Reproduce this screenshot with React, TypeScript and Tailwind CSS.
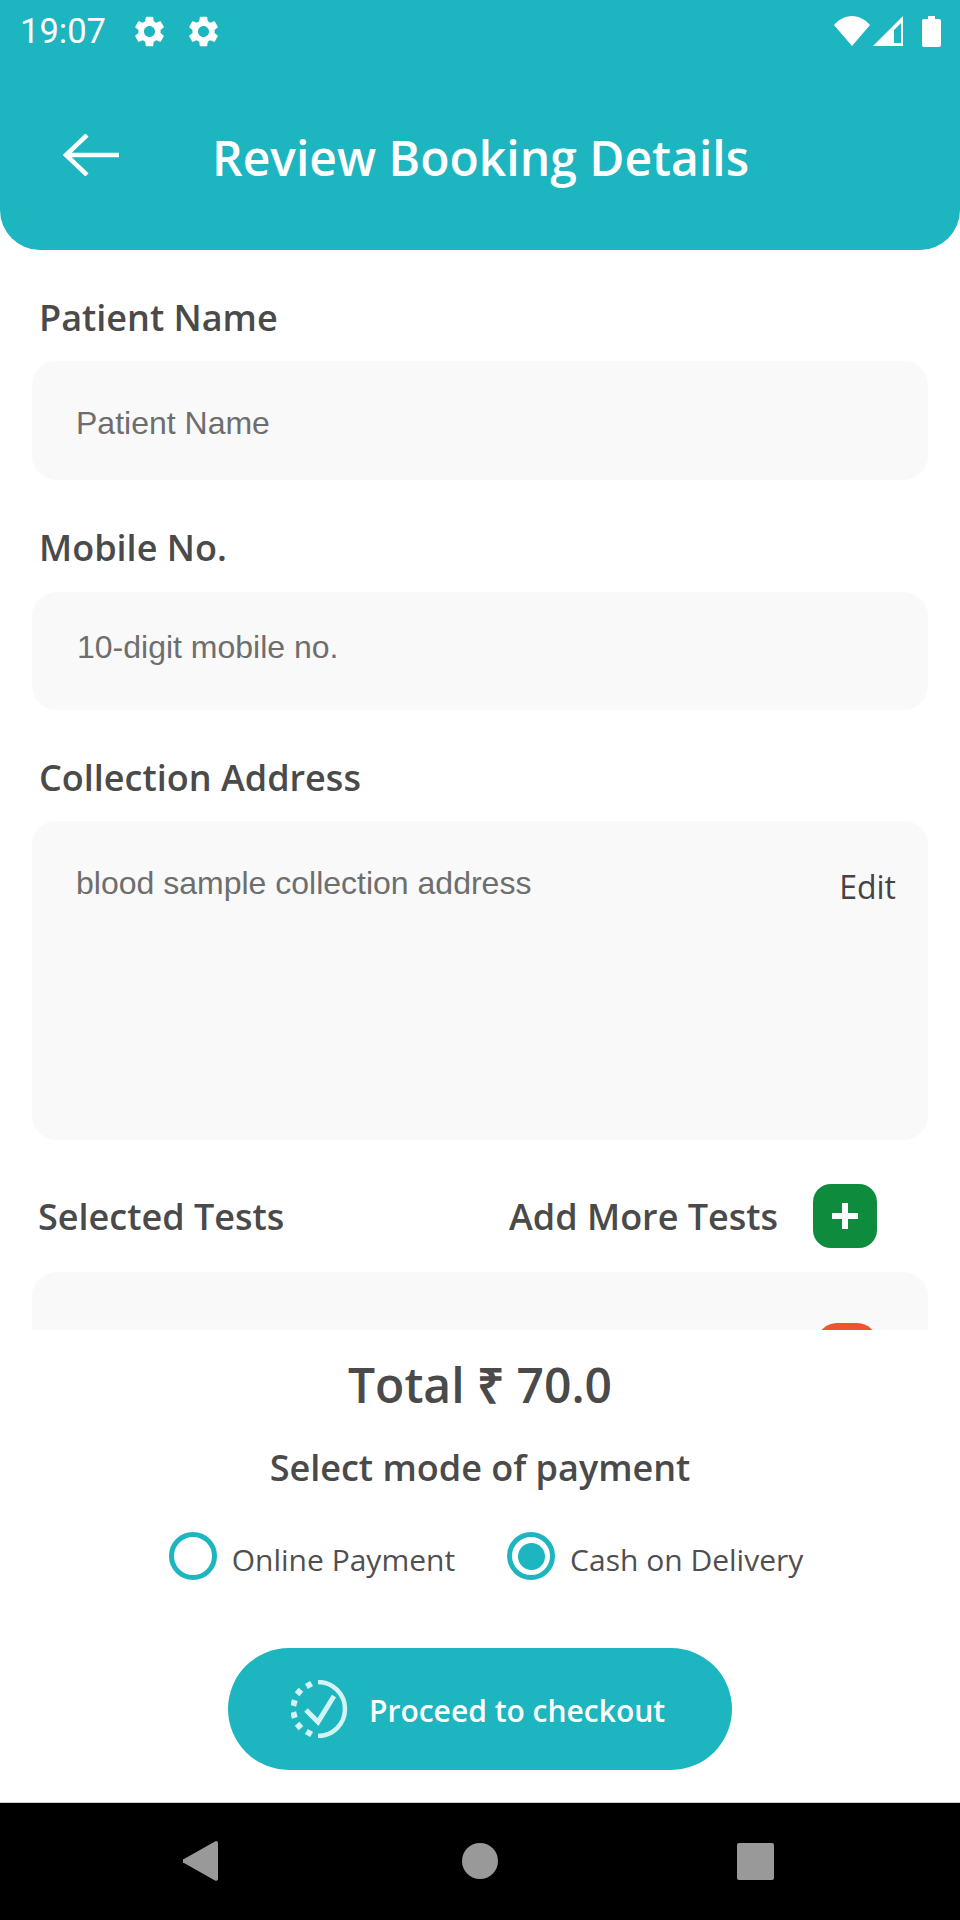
import React from 'react';

const GEAR =
  'M19.14 12.94c.04-.3.06-.61.06-.94 0-.32-.02-.64-.07-.94l2.03-1.58c.18-.14.23-.41.12-.61l-1.92-3.32c-.12-.22-.37-.29-.59-.22l-2.39.96c-.5-.38-1.03-.7-1.62-.94l-.36-2.54c-.04-.24-.24-.41-.48-.41h-3.84c-.24 0-.43.17-.47.41l-.36 2.54c-.59.24-1.13.57-1.62.94l-2.39-.96c-.22-.08-.47 0-.59.22L2.74 8.87c-.12.21-.08.47.12.61l2.03 1.58c-.05.3-.09.63-.09.94s.02.64.07.94l-2.03 1.58c-.18.14-.23.41-.12.61l1.92 3.32c.12.22.37.29.59.22l2.39-.96c.5.38 1.03.7 1.62.94l.36 2.54c.05.24.24.41.48.41h3.84c.24 0 .44-.17.47-.41l.36-2.54c.59-.24 1.13-.56 1.62-.94l2.39.96c.22.08.47 0 .59-.22l1.92-3.32c.12-.22.07-.47-.12-.61l-2.01-1.58zM12 15.6c-1.98 0-3.6-1.62-3.6-3.6s1.62-3.6 3.6-3.6 3.6 1.62 3.6 3.6-1.62 3.6-3.6 3.6z';

// Pontos quadrados à esquerda do ícone de checkout
const CHECK_DOTS = [
  [18, 5, 60],
  [8, 12, 40],
  [3, 23, 15],
  [3, 35, -15],
  [8, 46, -40],
  [18, 53, -60],
];

const Gear = () => (
  <svg viewBox="0 0 24 24" className="h-[37px] w-[37px]" fill="#fff">
    <path d={GEAR} />
  </svg>
);

const StatusBar = () => (
  <div className="flex h-[60px] items-center justify-between pl-[20px] pr-[19px] pt-[2px]">
    <div className="flex items-center">
      <span className="w-[111px] font-['Roboto',sans-serif] text-[34.5px] leading-none text-white">19:07</span>
      <div className="flex gap-[17px]">
        <Gear />
        <Gear />
      </div>
    </div>
    <div className="flex items-center">
      <svg viewBox="0 0 36 30" className="h-[30px] w-[36px]" fill="#fff">
        <path d="M18 30 0 9C4 4 11 0 18 0s14 4 18 9z" />
      </svg>
      <svg viewBox="0 0 30 30" className="ml-[3px] h-[30px] w-[30px]" fill="#fff">
        <path fillRule="evenodd" d="M30 0v30H0zM28 7 21 14v13h7z" />
      </svg>
      <svg viewBox="0 0 19 31" className="ml-[19px] h-[31px] w-[19px]" fill="#fff">
        <path d="M6 0h7v3h4a2 2 0 0 1 2 2v24a2 2 0 0 1-2 2H2a2 2 0 0 1-2-2V5a2 2 0 0 1 2-2h4z" />
      </svg>
    </div>
  </div>
);

const Label = ({ children }: { children: React.ReactNode }) => (
  <div className="h-[48px] pl-[7px] text-[36px] font-semibold leading-[46px] text-[#4a4a4a]">{children}</div>
);

const placeholderClass = "font-['Liberation_Sans',sans-serif] text-[32px] leading-none text-[#6e6e6e]";

const Radio = ({ label, checked }: { label: string; checked?: boolean }) => (
  <div className="flex items-center gap-[15px]">
    <div className="flex h-[48px] w-[48px] items-center justify-center rounded-full border-[5px] border-[#1cb5c0]">
      {checked && <div className="h-[27px] w-[27px] rounded-full bg-[#1cb5c0]" />}
    </div>
    <span className="mt-[8px] text-[30px] leading-none text-[#4f4f4f]">{label}</span>
  </div>
);

export default function App() {
  return (
    <div className="flex h-[1920px] w-[960px] flex-col overflow-hidden bg-white font-['Open_Sans',sans-serif]">
      {/* Cabeçalho */}
      <header className="h-[250px] shrink-0 rounded-b-[40px] bg-[#1cb5c0]">
        <StatusBar />
        <div className="flex items-center pl-[63px] pt-[68px]">
          <svg viewBox="0 0 56 42" className="h-[42px] w-[56px]" fill="none" stroke="#fff" strokeWidth="4.500">
            <path d="M56 21H3M24 1 3 21l21 20" />
          </svg>
          <h1 className="ml-[93px] mt-[6px] text-[48px] font-semibold leading-none text-white">Review Booking Details</h1>
        </div>
      </header>

      {/* Formulário */}
      <main className="h-[1080px] shrink-0 overflow-hidden px-[32px] pt-[45px]">
        <Label>Patient Name</Label>
        <div className={`mt-[18px] flex h-[119px] items-center rounded-[24px] bg-[#f9f9f9] pl-[44px] pt-[4px] ${placeholderClass}`}>
          Patient Name
        </div>

        <div className="mt-[45px]">
          <Label>Mobile No.</Label>
        </div>
        <div className={`mt-[19px] flex h-[118px] items-center rounded-[24px] bg-[#f9f9f9] pb-[8px] pl-[45px] ${placeholderClass}`}>
          10-digit mobile no.
        </div>

        <div className="mt-[45px]">
          <Label>Collection Address</Label>
        </div>
        <div className="mt-[18px] flex h-[319px] items-start justify-between rounded-[24px] bg-[#f9f9f9] pl-[44px] pr-[32px] pt-[46px]">
          <span className={placeholderClass}>blood sample collection address</span>
          <span className="mt-[1px] text-[32px] leading-[38px] text-[#444444]">Edit</span>
        </div>

        <div className="mt-[44px] flex h-[64px] items-center">
          <div className="mt-[2px] w-[477px] pl-[6px] text-[36px] font-semibold text-[#4a4a4a]">Selected Tests</div>
          <div className="mt-[2px] w-[304px] whitespace-nowrap text-[36px] font-semibold text-[#4a4a4a]">Add More Tests</div>
          <div className="flex h-[64px] w-[64px] items-center justify-center rounded-[18px] bg-[#0f8b3e]">
            <svg viewBox="0 0 26 26" className="h-[26px] w-[26px]" fill="#fff">
              <path d="M10 0h6v10h10v6H16v10h-6V16H0v-6h10z" />
            </svg>
          </div>
        </div>

        <div className="mt-[24px] h-[200px] rounded-[24px] bg-[#f9f9f9] pl-[785px] pt-[51px]">
          <div className="h-[60px] w-[60px] rounded-[20px] bg-[#f0532f]" />
        </div>
      </main>

      {/* Pagamento */}
      <section className="flex h-[472px] shrink-0 flex-col items-center pt-[25px]">
        <div className="text-[48px] font-semibold leading-[60px] text-[#4a4a4a]">Total ₹ 70.0</div>
        <div className="mt-[31px] text-[36px] font-semibold leading-[44px] text-[#4a4a4a]">Select mode of payment</div>
        <div className="ml-[12px] mt-[42px] flex items-center gap-[52px]">
          <Radio label="Online Payment" />
          <Radio label="Cash on Delivery" checked />
        </div>
        <button className="mt-[68px] flex h-[122px] w-[504px] items-center rounded-full bg-[#1cb5c0] pl-[63px]">
          <svg viewBox="0 0 58 58" className="h-[58px] w-[58px]" fill="none" stroke="#d4f3f5" strokeWidth="4.500">
            <path d="M27 2a27 27 0 0 1 0 54" />
            {CHECK_DOTS.map(([x, y, r]) => (
              <rect
                key={`${x}-${y}`}
                x={x - 3}
                y={y - 3}
                width="6"
                height="6"
                fill="#d4f3f5"
                stroke="none"
                transform={`rotate(${r} ${x} ${y})`}
              />
            ))}
            <path d="m15 30 12 12 16-26" strokeWidth="5" />
          </svg>
          <span className="ml-[20px] mt-[4px] text-[30px] font-semibold leading-none text-white">Proceed to checkout</span>
        </button>
      </section>

      {/* Barra de navegação */}
      <nav className="flex h-[118px] shrink-0 items-center border-t border-[#cccccc] bg-black pb-[1px] pl-[183px]">
        <svg viewBox="0 0 35 40" className="h-[40px] w-[35px]" fill="#999999">
          <path d="M33 0a2 2 0 0 1 2 2v36a2 2 0 0 1-3 1.500L1 22a2 2 0 0 1 0-4L32 .5z" />
        </svg>
        <div className="ml-[244px] h-[36px] w-[36px] rounded-full bg-[#999999]" />
        <div className="ml-[239px] h-[37px] w-[37px] rounded-[2px] bg-[#999999]" />
      </nav>
    </div>
  );
}
